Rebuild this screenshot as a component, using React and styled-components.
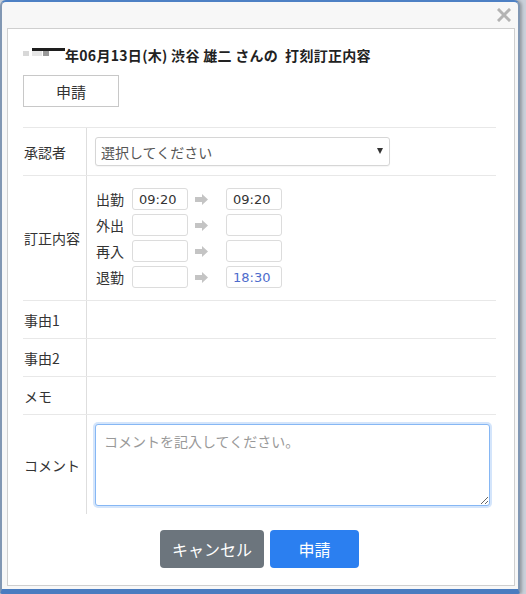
import React from 'react'
import styled, { createGlobalStyle } from 'styled-components'

const GlobalStyle = createGlobalStyle`
  html, body {
    margin: 0;
    padding: 0;
  }
  body {
    background: #c9d0d9;
    font-family: "DejaVu Sans", "Noto Sans CJK JP", sans-serif;
    color: #333;
  }
`

const Dialog = styled.div`
  width: 520px;
  height: 594px;
  box-sizing: border-box;
  background: #f7f7f7;
  border: 2px solid #8197b3;
  border-top-color: #4d80c4;
  border-bottom: 5px solid #4a7cc0;
  border-radius: 6px 6px 2px 2px;
  display: flex;
  flex-direction: column;
  box-shadow: 2px 0 3px rgba(0, 0, 0, 0.25);
`

const TitleBar = styled.div`
  height: 26px;
  display: flex;
  justify-content: flex-end;
  align-items: center;
  padding-right: 7px;
`

const Panel = styled.div`
  flex: 1;
  margin: 0 3px 3px 5px;
  background: #fff;
  border: 1px solid #cfcfcf;
  padding: 16px 18px 16px 15px;
  display: flex;
  flex-direction: column;
`

const Heading = styled.div`
  font-size: 14px;
  line-height: 20px;
  font-weight: bold;
  letter-spacing: 0.3px;
  color: #222;
  white-space: pre;
  display: flex;
  align-items: center;
  font-family: "Noto Sans CJK JP", sans-serif;
`

const Redacted = styled.span`
  display: inline-block;
  width: 42px;
  height: 20px;
  background:
    linear-gradient(#1e1e1e, #1e1e1e) 9px 3px / 33px 3px no-repeat,
    linear-gradient(#d8d8d8, #d8d8d8) 0 6px / 6px 5px no-repeat,
    linear-gradient(#9a9a9a, #9a9a9a) 20px 6px / 6px 5px no-repeat,
    linear-gradient(#e6e6e6, #e6e6e6) 9px 6px / 10px 5px no-repeat;
`

const OutlineButton = styled.button`
  margin-top: 10px;
  width: 96px;
  height: 32px;
  background: #fff;
  border: 1px solid #c8c8c8;
  font-family: "Noto Sans CJK JP", sans-serif;
  font-size: 15px;
  color: #333;
  padding: 0;
`

const Table = styled.div`
  margin-top: 20px;
  display: flex;
  flex-direction: column;
`

const Row = styled.div`
  display: grid;
  grid-template-columns: 64px 1fr;
  border-top: 1px solid #e8e8e8;
  min-height: ${p => p.$h}px;
  box-sizing: border-box;
`

const Label = styled.div`
  display: flex;
  align-items: center;
  padding-left: 1px;
  border-right: 1px solid #dedede;
  font-family: "Noto Sans CJK JP", sans-serif;
  font-size: 14px;
  color: #333;
`

const Cell = styled.div`
  padding: ${p => p.$pad || '0 8px'};
  display: flex;
  flex-direction: column;
  justify-content: center;
`

const SelectWrap = styled.div`
  position: relative;
  width: 295px;
`

const Select = styled.select`
  width: 100%;
  height: 29px;
  appearance: none;
  background: #fff;
  border: 1px solid #d6d6d6;
  border-radius: 3px;
  padding: 0 5px;
  font-family: "Noto Sans CJK JP", sans-serif;
  font-size: 14px;
  color: #555;
  box-shadow: 0 1px 1px rgba(0, 0, 0, 0.04);
`

const Caret = styled.span`
  position: absolute;
  right: 7px;
  top: 11px;
  width: 0;
  height: 0;
  border-left: 3px solid transparent;
  border-right: 3px solid transparent;
  border-top: 6px solid #333;
  pointer-events: none;
`

const TimeList = styled.div`
  display: flex;
  flex-direction: column;
  gap: 4px;
`

const TimeRow = styled.div`
  display: flex;
  align-items: center;
`

const TimeLabel = styled.span`
  width: 28px;
  margin-right: 8px;
  font-family: "Noto Sans CJK JP", sans-serif;
  font-size: 14px;
  line-height: 22px;
  color: #333;
`

const TimeInput = styled.input`
  width: 56px;
  height: 22px;
  box-sizing: border-box;
  border: 1px solid #dcdcdc;
  border-radius: 3px;
  padding: 0 0 0 6px;
  font-family: "DejaVu Sans", sans-serif;
  font-size: 13px;
  color: ${p => (p.$changed ? '#4d6ccc' : '#333')};
  background: #fff;
`

const ArrowBox = styled.span`
  width: 38px;
  display: flex;
  align-items: center;
  padding-left: 7px;
  box-sizing: border-box;
`

const Comment = styled.textarea`
  width: 395px;
  height: 82px;
  box-sizing: border-box;
  border: 1px solid #86b7f4;
  border-radius: 3px;
  box-shadow: 0 0 0 2px rgba(100, 160, 240, 0.28);
  padding: 6px 8px;
  font-family: "Noto Sans CJK JP", sans-serif;
  font-size: 14px;
  line-height: 20px;
  outline: none;
  resize: vertical;
  &::placeholder {
    color: #999;
  }
`

const Footer = styled.div`
  margin-top: 16px;
  display: flex;
  justify-content: center;
  gap: 6px;
`

const ActionButton = styled.button`
  height: 38px;
  width: ${p => p.$w}px;
  border: none;
  border-radius: 4px;
  background: ${p => (p.$primary ? '#2b7ff0' : '#6c757d')};
  color: #fff;
  font-family: "Noto Sans CJK JP", sans-serif;
  font-size: 16px;
  font-weight: 400;
  padding: 0;
`

function CloseIcon() {
  return (
    <svg width="14" height="14" viewBox="0 0 14 14">
      <path d="M2 2 L12 12 M12 2 L2 12" stroke="#b3b3b3" strokeWidth="3" strokeLinecap="square" />
    </svg>
  )
}

function Arrow() {
  return (
    <svg width="13" height="11" viewBox="0 0 13 11">
      <path d="M0 3 H7 V0 L13 5.5 L7 11 V8 H0 Z" fill="#c4c4c4" />
    </svg>
  )
}

const times = [
  { label: '出勤', before: '09:20', after: '09:20' },
  { label: '外出', before: '', after: '' },
  { label: '再入', before: '', after: '' },
  { label: '退勤', before: '', after: '18:30', changed: true },
]

export default function App() {
  return (
    <>
      <GlobalStyle />
      <Dialog>
        <TitleBar>
          <CloseIcon />
        </TitleBar>
        <Panel>
          <Heading>
            <Redacted />
            {'年06月13日(木) 渋谷 雄二 さんの  打刻訂正内容'}
          </Heading>
          <div>
            <OutlineButton>申請</OutlineButton>
          </div>

          <Table>
            <Row $h={48}>
              <Label>承認者</Label>
              <Cell>
                <SelectWrap>
                  <Select defaultValue="">
                    <option value="">選択してください</option>
                  </Select>
                  <Caret />
                </SelectWrap>
              </Cell>
            </Row>

            <Row $h={125}>
              <Label>訂正内容</Label>
              <Cell $pad="0 9px">
                <TimeList>
                  {times.map((t, i) => (
                    <TimeRow key={i}>
                      <TimeLabel>{t.label}</TimeLabel>
                      <TimeInput readOnly value={t.before} />
                      <ArrowBox>
                        <Arrow />
                      </ArrowBox>
                      <TimeInput readOnly value={t.after} $changed={t.changed} />
                    </TimeRow>
                  ))}
                </TimeList>
              </Cell>
            </Row>

            <Row $h={38}>
              <Label>事由1</Label>
              <Cell />
            </Row>
            <Row $h={38}>
              <Label>事由2</Label>
              <Cell />
            </Row>
            <Row $h={38}>
              <Label>メモ</Label>
              <Cell />
            </Row>

            <Row $h={100}>
              <Label>コメント</Label>
              <Cell>
                <Comment placeholder="コメントを記入してください。" />
              </Cell>
            </Row>
          </Table>

          <Footer>
            <ActionButton $w={104}>キャンセル</ActionButton>
            <ActionButton $w={89} $primary>申請</ActionButton>
          </Footer>
        </Panel>
      </Dialog>
    </>
  )
}
